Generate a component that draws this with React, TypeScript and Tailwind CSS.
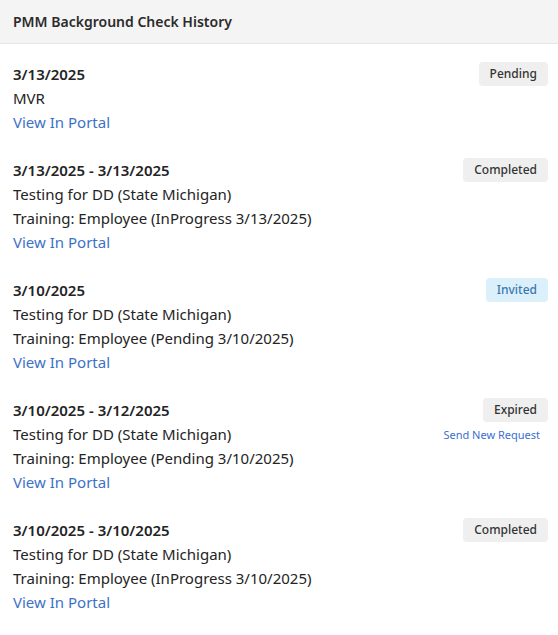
const checks = [
  {
    dates: "3/13/2025",
    lines: ["MVR"],
    status: "Pending",
  },
  {
    dates: "3/13/2025 - 3/13/2025",
    lines: ["Testing for DD (State Michigan)", "Training: Employee (InProgress 3/13/2025)"],
    status: "Completed",
  },
  {
    dates: "3/10/2025",
    lines: ["Testing for DD (State Michigan)", "Training: Employee (Pending 3/10/2025)"],
    status: "Invited",
  },
  {
    dates: "3/10/2025 - 3/12/2025",
    lines: ["Testing for DD (State Michigan)", "Training: Employee (Pending 3/10/2025)"],
    status: "Expired",
    resend: true,
  },
  {
    dates: "3/10/2025 - 3/10/2025",
    lines: ["Testing for DD (State Michigan)", "Training: Employee (InProgress 3/10/2025)"],
    status: "Completed",
  },
];

function StatusBadge({ status }: { status: string }) {
  const invited = status === "Invited";
  return (
    <span
      className={
        invited
          ? "flex h-6 items-center rounded px-[11px] text-[12px] font-medium bg-[#dcf0fc] text-[#3a78ad]"
          : "flex h-6 items-center rounded px-[11px] text-[12px] font-medium bg-[#efefef] text-[#333]"
      }
    >
      {status}
    </span>
  );
}

export default function App() {
  return (
    <div className="min-h-screen bg-white text-[#242424]" style={{ fontFamily: '"Noto Sans", sans-serif' }}>
      <div className="flex h-[44px] items-center border-b border-[#e6e6e6] bg-[#f4f4f4] px-[13px]">
        <h2 className="text-[14px] font-semibold text-[#2b2b2b]">PMM Background Check History</h2>
      </div>
      <div className="flex flex-col gap-6 pl-[13px] pr-[10px] pt-[18px]">
        {checks.map((c, i) => (
          <div key={i} className="flex justify-between">
            <div className="flex flex-col text-[15px] leading-6">
              <span className="font-semibold">{c.dates}</span>
              {c.lines.map((l) => (
                <span key={l}>{l}</span>
              ))}
              <a href="#" className="text-[#3b72c6]">View In Portal</a>
            </div>
            <div className="flex flex-col items-end">
              <StatusBadge status={c.status} />
              {c.resend && (
                <a href="#" className="mr-[8px] mt-[5px] text-[11px] text-[#3b6fd0]">Send New Request</a>
              )}
            </div>
          </div>
        ))}
      </div>
    </div>
  );
}
